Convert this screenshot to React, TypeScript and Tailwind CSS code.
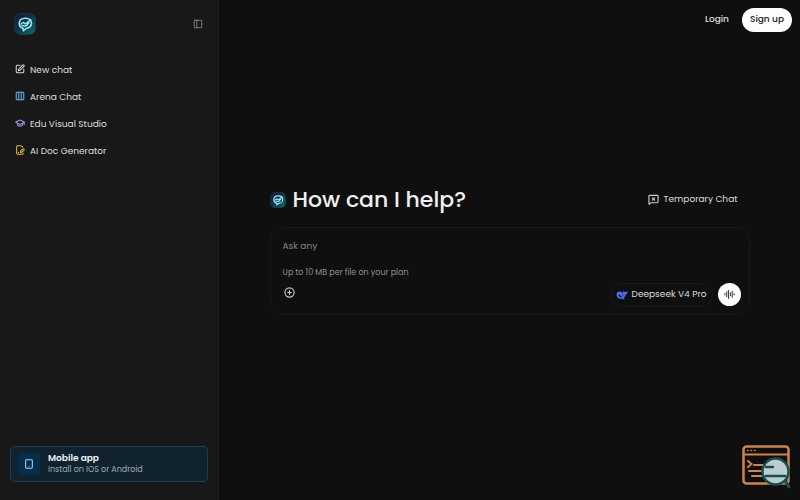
import {
  AudioLines,
  CirclePlus,
  Columns3,
  FilePenLine,
  GraduationCap,
  MessageSquareX,
  PanelLeft,
  SquarePen,
  Tablet,
} from "lucide-react";

const navItems = [
  { label: "New chat", icon: SquarePen, color: "text-[#d4d4d4]" },
  { label: "Arena Chat", icon: Columns3, color: "text-[#63b3dd]" },
  { label: "Edu Visual Studio", icon: GraduationCap, color: "text-[#a393e6]" },
  { label: "AI Doc Generator", icon: FilePenLine, color: "text-[#e0bd2e]" },
];

const Logo = ({ className, id }: { className: string; id: string }) => (
  <svg viewBox="0 0 44 44" className={className} aria-hidden="true">
    <defs>
      <linearGradient id={id} x1="0" y1="0" x2="1" y2="1">
        <stop offset="0" stopColor="#141a3c" />
        <stop offset="0.45" stopColor="#0f2f4c" />
        <stop offset="1" stopColor="#0b7261" />
      </linearGradient>
    </defs>
    <rect x="1" y="1" width="42" height="42" rx="12" fill={`url(#${id})`} stroke="#24384f" strokeWidth="1.500" />
    <path
      d="M18 30.500C13 29 10.500 25.500 10.500 21C10.500 14.500 15.500 10.500 23 10.500S35 15 35 20.500S30 31 24 31L19 35.500Z"
      fill="none"
      stroke="#9eeaf0"
      strokeWidth="3.200"
      strokeLinejoin="round"
    />
    <path
      d="M14 22L19 18.500L23 22L33 13.500M16 25L21 26L25 25.500L30 19"
      fill="none"
      stroke="#9eeaf0"
      strokeWidth="2.800"
      strokeLinecap="round"
      strokeLinejoin="round"
    />
  </svg>
);

const WhaleIcon = () => (
  <svg viewBox="0 0 24 20" className="h-[10px] w-3" aria-hidden="true">
    <path
      d="M1 9C1 4.500 4.500 2 8.500 3C11 3.600 12 5 14 6.500C14 4 14.500 2 16 1C16 3 17 4 18.500 4.200C20.500 4.400 21.500 3 23.500 3C23.500 6.500 22 8.500 19.500 9C19 12 17.500 14.500 15.500 16L18 18.500C14.500 19 12.500 18 11 17.500C5 18.500 1 14.500 1 9Z"
      fill="#5068f2"
    />
    <path d="M5 9C8 9 10 12 12.500 14.500C9 15.500 5.500 13 5 9Z" fill="#10121f" />
    <circle cx="14" cy="10" r="1.100" fill="#10121f" />
  </svg>
);

const Sidebar = () => (
  <aside className="flex w-[219px] shrink-0 flex-col border-r border-[#1c1c1c] bg-[#181818] px-[10px] pb-[18px]">
    <div className="flex h-12 items-center justify-between pr-[5px] pl-1">
      <Logo id="logo-side" className="size-[22px]" />
      <button aria-label="Toggle sidebar" className="text-[#8b8b8b]">
        <PanelLeft className="size-[10px]" />
      </button>
    </div>

    <nav className="mt-[9px] flex flex-col">
      {navItems.map(({ label, icon: Icon, color }) => (
        <a key={label} href="#" className="flex h-[27px] items-center gap-[5px] pl-[5px] text-[9px] text-[#dedede]">
          <Icon className={`mb-1 size-[10px] ${color}`} strokeWidth={2.5} />
          {label}
        </a>
      ))}
    </nav>

    <a
      href="#"
      className="mt-auto flex h-9 items-center gap-2 rounded-[5px] border border-[#124453] bg-[#10222d] px-[7px]"
    >
      <span className="flex size-[22px] items-center justify-center rounded bg-[#062d49]">
        <Tablet className="size-[10px] text-[#a4d9ef]" strokeWidth={2.5} />
      </span>
      <span className="flex flex-col">
        <span className="text-[9px] leading-[11px] font-semibold text-[#eef4f6]">Mobile app</span>
        <span className="text-[8px] leading-[11px] text-[#9eabb2]">Install on IOS or Android</span>
      </span>
    </a>
  </aside>
);

const Composer = () => (
  <form className="mt-[15px] rounded-[14px] border border-[#181818] px-2 pb-[7px]">
    <input
      aria-label="Message"
      placeholder="Ask any"
      className="mt-3 block h-[14px] w-full px-1 text-[9px] text-[#dedede] outline-none placeholder:text-[#858585]"
    />
    <p className="mt-3 px-1 text-[8px] leading-[14px] text-[#8e8e8e]">Up to 10 MB per file on your plan</p>
    <div className="mt-[3px] flex items-center">
      <button type="button" aria-label="Attach file" className="mb-1 px-[5px] text-[#c9c9c9]">
        <CirclePlus className="size-[11px]" strokeWidth={2.5} />
      </button>
      <button
        type="button"
        className="ml-auto flex h-6 items-center gap-1 rounded-full border border-[#181818] px-[5px] text-[9px] text-[#dedede]"
      >
        <WhaleIcon />
        Deepseek V4 Pro
      </button>
      <button
        type="button"
        aria-label="Voice mode"
        className="ml-[5px] flex size-[23px] items-center justify-center rounded-full bg-white text-[#222]"
      >
        <AudioLines className="size-[11px]" />
      </button>
    </div>
  </form>
);

const HelpButton = () => (
  <button aria-label="Open console" className="absolute right-[9px] bottom-[11px]">
    <svg viewBox="0 0 49 44" className="h-11 w-[49px]" fill="none" strokeLinecap="round">
      <rect x="1.500" y="1.500" width="45" height="37" rx="3" stroke="#cf8549" strokeWidth="2.500" />
      <path d="M2 9.500H46" stroke="#cf8549" strokeWidth="2" />
      <path d="M5.500 5.500H6M9 5.500H9.500M12.500 5.500H13" stroke="#cf8549" strokeWidth="1.600" />
      <path d="M6 16L9.500 19L6 22M12 20H21M7 26H19M10 31H20" stroke="#cf8549" strokeWidth="2" />
      <path d="M43 36L47 42" stroke="#174f54" strokeWidth="3" />
      <circle cx="33.500" cy="26.500" r="13" fill="#bccdd0" stroke="#174f54" strokeWidth="2.500" />
      <path d="M24 22H31M24 31H43" stroke="#174f54" strokeWidth="2.500" />
    </svg>
  </button>
);

const App = () => {
  return (
    <div className="relative flex min-h-screen bg-[#0f0f0f] font-['Poppins','Inter',sans-serif] text-[#dedede]">
      <Sidebar />
      <main className="flex flex-1 flex-col">
        <header className="flex h-10 items-center justify-end gap-[13px] pr-2 text-[9px] font-medium">
          <a href="#">Login</a>
          <button className="h-6 rounded-full bg-white px-2 text-[#181818]">Sign up</button>
        </header>

        <div className="flex flex-1 items-center justify-center px-6 pb-[38px]">
          <div className="w-full max-w-[480px]">
            <div className="flex items-center justify-between pr-3">
              <div className="flex items-center gap-[7px]">
                <Logo id="logo-title" className="size-4" />
                <h1 className="text-[22px] leading-6 font-medium text-[#efefef]">How can I help?</h1>
              </div>
              <button className="flex items-center gap-[5px] text-[9px]">
                <MessageSquareX className="size-[11px] text-[#c9c9c9]" strokeWidth={2.5} />
                Temporary Chat
              </button>
            </div>
            <Composer />
          </div>
        </div>
      </main>
      <HelpButton />
    </div>
  );
};

export default App;
